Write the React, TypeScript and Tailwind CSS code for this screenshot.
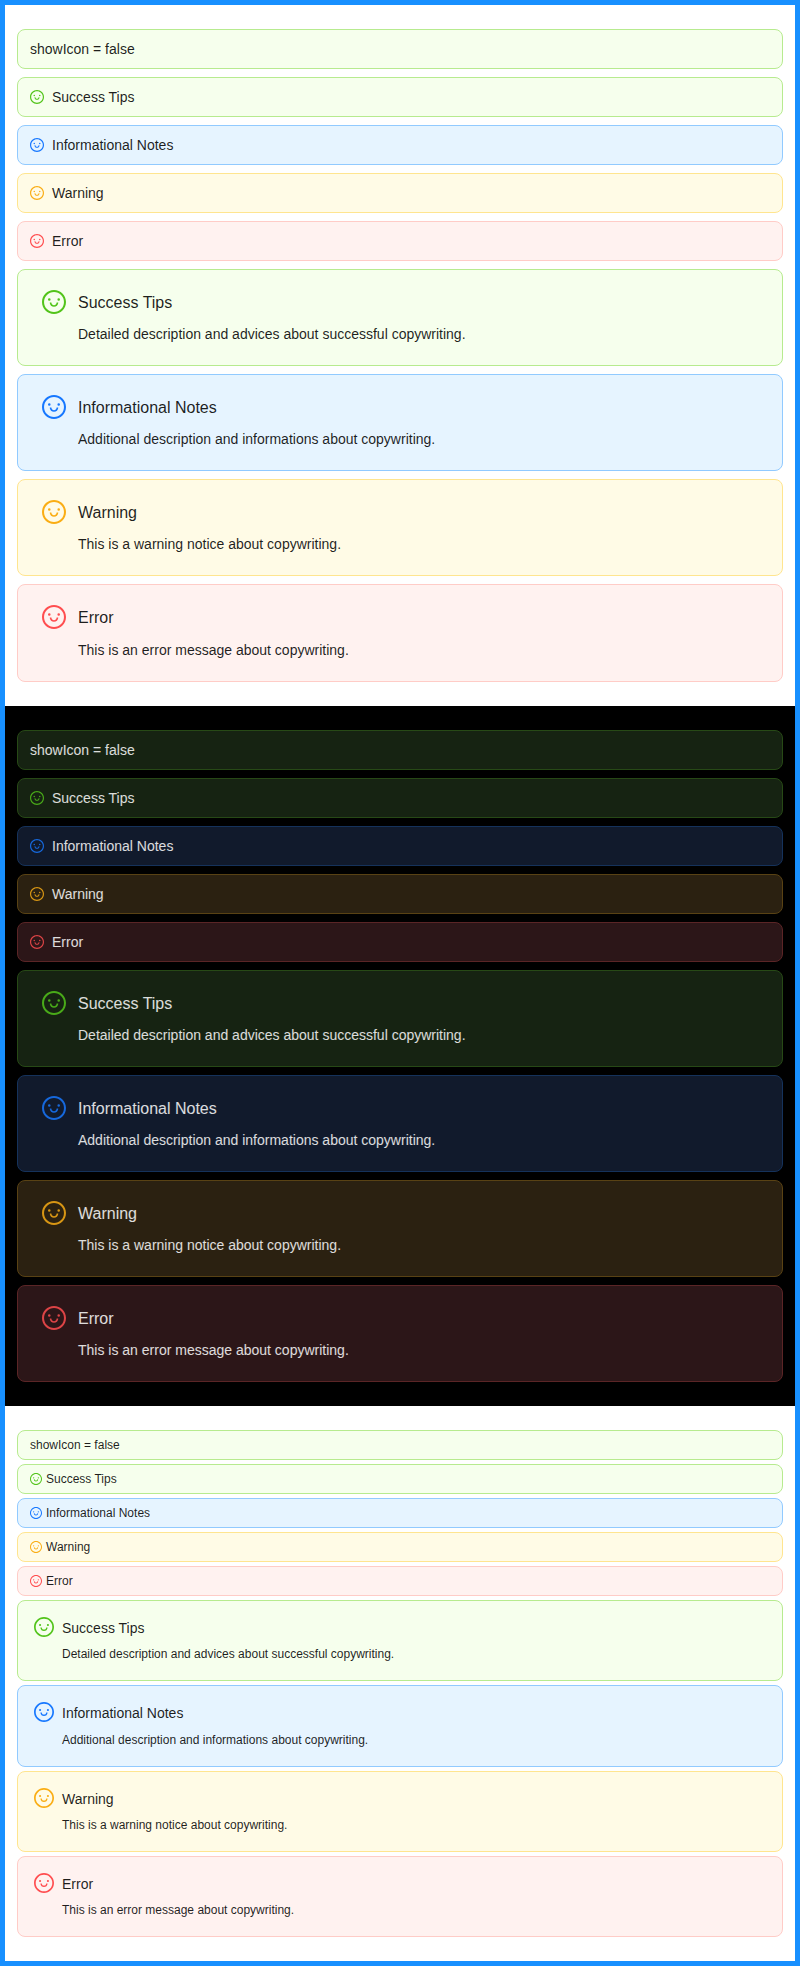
import React from "react";

type Kind = "success" | "info" | "warning" | "error";
type Mode = "light" | "dark";

interface Notice {
  kind: Kind;
  title: string;
  description: string;
}

const notices: Notice[] = [
  { kind: "success", title: "Success Tips", description: "Detailed description and advices about successful copywriting." },
  { kind: "info", title: "Informational Notes", description: "Additional description and informations about copywriting." },
  { kind: "warning", title: "Warning", description: "This is a warning notice about copywriting." },
  { kind: "error", title: "Error", description: "This is an error message about copywriting." },
];

const boxColors: Record<Mode, Record<Kind, string>> = {
  light: {
    success: "bg-[#f6ffed] border-[#b7eb8f]",
    info: "bg-[#e6f4ff] border-[#91caff]",
    warning: "bg-[#fffbe6] border-[#ffe58f]",
    error: "bg-[#fff2f0] border-[#ffccc7]",
  },
  dark: {
    success: "bg-[#162312] border-[#274916]",
    info: "bg-[#111a2c] border-[#15325b]",
    warning: "bg-[#2b2111] border-[#594214]",
    error: "bg-[#2c1618] border-[#5b2526]",
  },
};

const iconColors: Record<Mode, Record<Kind, string>> = {
  light: {
    success: "text-[#52c41a]",
    info: "text-[#1677ff]",
    warning: "text-[#faad14]",
    error: "text-[#ff4d4f]",
  },
  dark: {
    success: "text-[#49aa19]",
    info: "text-[#1668dc]",
    warning: "text-[#d89614]",
    error: "text-[#dc4446]",
  },
};

function SmileIcon({ className }: { className: string }) {
  return (
    <svg viewBox="64 64 896 896" fill="currentColor" aria-hidden="true" className={`block shrink-0 ${className}`}>
      <path d="M288 421a48 48 0 1096 0 48 48 0 10-96 0zm352 0a48 48 0 1096 0 48 48 0 10-96 0zM512 64C264.6 64 64 264.6 64 512s200.6 448 448 448 448-200.6 448-448S759.4 64 512 64zm263 711c-34.2 34.2-74 61-118.3 79.8C611 874.2 562.3 884 512 884c-50.3 0-99-9.8-144.8-29.2A370.4 370.4 0 01248.9 775c-34.2-34.2-61-74-79.8-118.3C149.8 611 140 562.3 140 512s9.8-99 29.2-144.8A370.4 370.4 0 01249 248.9c34.2-34.2 74-61 118.3-79.8C413 149.8 461.7 140 512 140c50.3 0 99 9.8 144.8 29.2A370.4 370.4 0 01775.1 249c34.2 34.2 61 74 79.8 118.3C874.2 413 884 461.7 884 512s-9.8 99-29.2 144.8A368.89 368.89 0 01775 775zM664 533h-48.1c-4.2 0-7.8 3.2-8.1 7.4C604 589.9 562.5 629 512 629s-92.1-39.1-95.8-88.6c-.3-4.2-3.9-7.4-8.1-7.4H360a8 8 0 00-8 8.4c4.4 84.3 74.5 151.6 160 151.6s155.6-67.3 160-151.6a8 8 0 00-8-8.4z" />
    </svg>
  );
}

interface AlertProps {
  kind: Kind;
  mode: Mode;
  compact: boolean;
  title: string;
  description?: string;
  showIcon?: boolean;
}

function Alert({ kind, mode, compact, title, description, showIcon = true }: AlertProps) {
  const box = boxColors[mode][kind];
  const tint = iconColors[mode][kind];

  if (description) {
    return (
      <div role="alert" className={`flex items-start rounded-lg border ${box} ${compact ? "gap-2 p-4" : "gap-3 px-6 py-5"}`}>
        <SmileIcon className={`${tint} ${compact ? "size-5" : "size-6"}`} />
        <div className="min-w-0 flex-1">
          <div className={compact ? "mb-1 text-[14px] leading-[1.6666667]" : "mb-2 text-[16px] leading-[1.5714286]"}>{title}</div>
          <div>{description}</div>
        </div>
      </div>
    );
  }

  return (
    <div role="alert" className={`flex items-center rounded-lg border px-3 ${box} ${compact ? "gap-1 py-1" : "gap-2 py-2"}`}>
      {showIcon && <SmileIcon className={`${tint} ${compact ? "size-3" : "size-3.5"}`} />}
      <div className="min-w-0 flex-1">{title}</div>
    </div>
  );
}

function Panel({ mode, compact = false }: { mode: Mode; compact?: boolean }) {
  const surface = mode === "dark" ? "bg-black text-white/85" : "bg-white text-black/88";
  const density = compact ? "gap-1 text-[12px] leading-[1.6666667]" : "gap-2 text-[14px] leading-[1.5714286]";
  return (
    <section className={`flex flex-col px-3 py-6 ${surface} ${density}`}>
      <Alert kind="success" mode={mode} compact={compact} title="showIcon = false" showIcon={false} />
      {notices.map((n) => (
        <Alert key={n.kind} kind={n.kind} mode={mode} compact={compact} title={n.title} />
      ))}
      {notices.map((n) => (
        <Alert key={`${n.kind}-detail`} kind={n.kind} mode={mode} compact={compact} title={n.title} description={n.description} />
      ))}
    </section>
  );
}

export default function App() {
  return (
    <main className="border-[5px] border-[#1890ff] font-['Liberation_Sans',Arial,sans-serif]">
      <Panel mode="light" />
      <Panel mode="dark" />
      <Panel mode="light" compact />
    </main>
  );
}
